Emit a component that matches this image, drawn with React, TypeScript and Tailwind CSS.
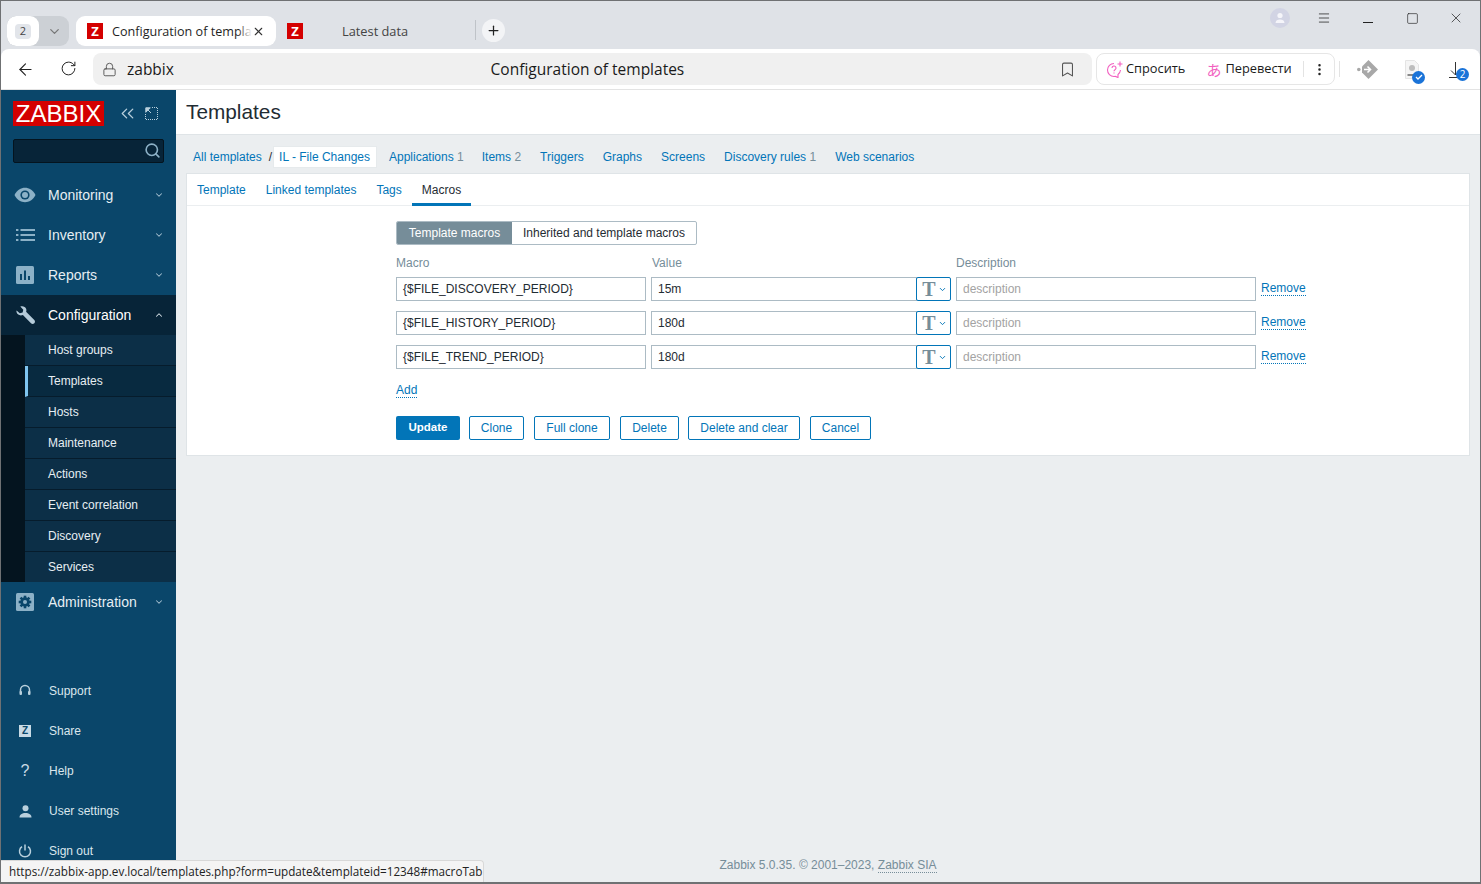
import React from "react";
import { ChevronDown, ChevronUp, X, Plus, ArrowLeft, RotateCw, Lock, Bookmark, Menu, Square, MoreVertical, Search, ChevronsLeft } from "lucide-react";

const ui = { fontFamily: '"Open Sans","Noto Sans",sans-serif' };

const ZIcon = () => (
  <span className="flex h-4 w-4 items-center justify-center bg-[#d40000] text-[13px] font-bold leading-none text-white">Z</span>
);

const NavIcon = ({ name }: { name: string }) => {
  const c = "#8cb1c7";
  if (name === "eye")
    return (
      <svg width="22" height="16" viewBox="0 0 22 16">
        <path d="M0.5 8C3 3 7 .8 11 .8S19 3 21.5 8C19 13 15 15.2 11 15.2S3 13 .5 8Z" fill={c} />
        <circle cx="11" cy="8" r="4.6" fill="#0a466a" />
        <circle cx="11" cy="8" r="3" fill={c} />
      </svg>
    );
  if (name === "list")
    return (
      <svg width="19" height="14" viewBox="0 0 19 14" fill={c} className="ml-[2px]">
        <rect x="0" y="1" width="2.4" height="2" /><rect x="4.5" y="1" width="14.5" height="2" />
        <rect x="0" y="6" width="2.4" height="2" /><rect x="4.5" y="6" width="14.5" height="2" />
        <rect x="0" y="11" width="2.4" height="2" /><rect x="4.5" y="11" width="14.5" height="2" />
      </svg>
    );
  if (name === "chart")
    return (
      <svg width="18" height="18" viewBox="0 0 18 18" className="ml-[2px]">
        <rect width="18" height="18" rx="1.5" fill={c} />
        <rect x="4" y="8" width="2" height="6" fill="#0a466a" /><rect x="8" y="4.5" width="2" height="9.5" fill="#0a466a" /><rect x="12" y="10" width="2" height="4" fill="#0a466a" />
      </svg>
    );
  if (name === "wrench")
    return (
      <svg width="19" height="19" viewBox="0 0 19 19" className="ml-[2px]">
        <path d="M.6 4.500 3.800 7.300l2.800-.7.700-2.800L4.300.6C6.800-.3 9.400.8 10.200 3c.3 1 .3 2-.1 2.800l8.200 8.100c.9.9.9 2.300 0 3.300-1 1-2.400 1-3.300 0L6.900 9c-2.700 1-5.400 0-6.200-2.400-.3-.7-.3-1.400-.1-2.100Z" fill="#b5cbd9" />
      </svg>
    );
  const teeth = [0, 45, 90, 135];
  return (
    <svg width="18" height="18" viewBox="0 0 18 18" className="ml-[2px]">
      <rect width="18" height="18" rx="1.5" fill={c} />
      {teeth.map((a) => (
        <rect key={a} x="7.700" y="2.700" width="2.600" height="12.600" fill="#0a466a" transform={`rotate(${a} 9 9)`} />
      ))}
      <circle cx="9" cy="9" r="4.700" fill="#0a466a" />
      <circle cx="9" cy="9" r="2" fill={c} />
    </svg>
  );
};

const MainItem = ({ icon, label, active }: { icon: string; label: string; active?: boolean }) => (
  <div className={"flex h-10 items-center pl-[13px] pr-[12px] " + (active ? "bg-[#072438] text-white" : "text-[#e6eef3]")}>
    <span className="flex w-[34px] items-center"><NavIcon name={icon} /></span>
    <span className="flex-1 text-[14px] leading-[20px]">{label}</span>
    {active ? <ChevronUp size={10} strokeWidth={2.500} className="text-[#d5e0e7]" /> : <ChevronDown size={10} strokeWidth={2.500} className="text-[#a5c0d0]" />}
  </div>
);

const SubItem = ({ label, active, last }: { label: string; active?: boolean; last?: boolean }) => (
  <div className={(last ? "h-[30px] " : "h-[31px] border-b border-[#061c2c] ") + "flex items-center text-[12px] text-[#e6eef3] " + (active ? "border-l-[3px] border-l-[#7fc4ef] bg-[#082a40] pl-5" : "bg-[#0c2f47] pl-[23px]")}>
    {label}
  </div>
);

const BottomIcon = ({ name }: { name: string }) => {
  const c = "#b9d0dd";
  if (name === "head")
    return (
      <svg width="14" height="14" viewBox="0 0 14 14" fill="none">
        <path d="M2.500 8.500V6a4.500 4.500 0 0 1 9 0v2.500" stroke={c} strokeWidth="1.500" />
        <rect x="1.500" y="7" width="2.500" height="4" rx="1" fill={c} /><rect x="10" y="7" width="2.500" height="4" rx="1" fill={c} />
      </svg>
    );
  if (name === "z") return <span className="flex h-3 w-3 items-center justify-center bg-[#c8dae5] text-[10px] font-bold leading-none text-[#0a466a]">Z</span>;
  if (name === "q") return <span className="text-[16px] leading-none text-[#c8dae5]">?</span>;
  if (name === "user")
    return (
      <svg width="13" height="13" viewBox="0 0 13 13" fill={c}>
        <circle cx="6.500" cy="3.300" r="3" /><path d="M.5 12.500c0-3 2.500-4.500 6-4.500s6 1.500 6 4.500Z" />
      </svg>
    );
  return (
    <svg width="14" height="14" viewBox="0 0 14 14" fill="none" stroke={c} strokeWidth="1.500">
      <path d="M4 2.700a5.500 5.500 0 1 0 6 0" /><path d="M7 .5v6" />
    </svg>
  );
};

const BottomItem = ({ icon, label }: { icon: string; label: string }) => (
  <div className="flex h-10 items-center text-[12px] text-[#dbe6ed]">
    <span className="flex w-[48px] justify-center"><BottomIcon name={icon} /></span>
    {label}
  </div>
);

const Link = ({ children, count }: { children: React.ReactNode; count?: string }) => (
  <span className="text-[#0275b8]">{children}{count && <span className="text-[#768d99]"> {count}</span>}</span>
);

const MacroRow = ({ macro, value }: { macro: string; value: string }) => (
  <div className="flex h-6 items-center gap-[5px]">
    <div className="flex h-6 w-[250px] items-center border border-[#acbbc4] px-1.5 text-[#1f2c33]">{macro}</div>
    <div className="flex w-[300px]">
      <div className="flex h-6 flex-1 items-center border border-[#acbbc4] px-1.5 text-[#1f2c33]">{value}</div>
      <div className="-ml-px flex h-6 w-[35px] items-center justify-center gap-[2px] rounded-[2px] border border-[#0275b8] pl-[2px]">
        <span className="text-[20px] font-bold leading-none text-[#768d99]" style={{ fontFamily: '"Liberation Serif",serif' }}>T</span>
        <ChevronDown size={9} strokeWidth={2.500} className="text-[#0275b8]" />
      </div>
    </div>
    <div className="flex h-6 w-[300px] items-center border border-[#acbbc4] px-1.5 text-[#a3a3a3]">description</div>
    <span className="border-b border-dotted border-[#0275b8] leading-[13px] text-[#0275b8]">Remove</span>
  </div>
);

export default function App() {
  const btn = "flex h-6 items-center justify-center rounded-[2px] border border-[#0275b8] text-[#0275b8] ";
  return (
    <div className="relative flex h-[884px] w-[1481px] flex-col overflow-hidden border border-b-2 border-[#6f7173] bg-[#dfe2e7]" style={{ fontFamily: '"Liberation Sans",Arial,sans-serif', fontSize: 12 }}>
      {/* Browser tabs */}
      <div className="flex h-[48px] shrink-0 pt-[15px] pl-1.5 text-[14px] text-[#1f1f1f]" style={ui}>
        <div className="flex h-[30px] w-[62px] overflow-hidden rounded-[9px] bg-[#ccd0d5]">
          <div className="flex w-[32px] items-center justify-center rounded-[9px] bg-white">
            <span className="flex h-[15px] w-[16px] items-center justify-center rounded-[4px] bg-[#e2e5ea] text-[11px] text-[#444]">2</span>
          </div>
          <div className="flex flex-1 items-center justify-center"><ChevronDown size={15} className="text-[#777]" /></div>
        </div>
        <div className="ml-[7px] flex h-[30px] w-[200px] items-center rounded-[9px] bg-white pl-[11px] pr-[11px]">
          <ZIcon />
          <span className="relative ml-[9px] flex-1 whitespace-nowrap pt-[2px] text-[12.600px]">
            Configuration of templa
            <span className="absolute right-0 top-0 h-full w-[14px] bg-gradient-to-r from-white/0 to-white" />
          </span>
          <X size={13} className="text-[#333]" />
        </div>
        <div className="flex h-[30px] w-[199px] items-center pl-[11px]">
          <ZIcon />
          <span className="ml-[39px] pt-[2px] text-[12.800px] text-[#444]">Latest data</span>
        </div>
        <div className="-mt-px flex h-[30px] items-center">
          <div className="h-5 w-px bg-[#bfc3c8]" />
          <div className="ml-1.5 flex h-[23px] w-[23px] items-center justify-center rounded-full bg-[#f3f4f6]"><Plus size={15} className="text-[#222]" /></div>
        </div>
        <div className="ml-auto flex h-[4px] items-start">
          <div className="-mt-[8px] flex items-center text-[#222]">
            <div className="flex h-[20px] w-[20px] items-center justify-center rounded-full bg-[#d2d4e4]">
              <svg width="12" height="12" viewBox="0 0 12 12" fill="#f5f5fa"><circle cx="6" cy="3.500" r="2.600" /><path d="M1.500 11c0-2.500 2-3.500 4.500-3.500s4.500 1 4.500 3.500Z" /></svg>
            </div>
            <Menu size={14} className="ml-[27px]" strokeWidth={1.300} />
            <div className="ml-[32px] mt-[8px] h-px w-[10px] bg-[#222]" />
            <Square size={13} className="ml-[33px]" strokeWidth={1.200} />
            <X size={16} className="ml-[29px] mr-[16px]" strokeWidth={1.100} />
          </div>
        </div>
      </div>

      {/* Browser toolbar */}
      <div className="flex h-[41px] shrink-0 items-center rounded-t-[8px] border-b border-[#e3e3e3] bg-white" style={ui}>
        <ArrowLeft size={19} strokeWidth={1.400} className="ml-[15px] text-[#222]" />
        <RotateCw size={17} strokeWidth={1.400} className="ml-[25px] -mt-[2px] text-[#222]" />
        <div className="relative ml-[16px] flex h-[32px] w-[999px] items-center rounded-[8px] bg-[#f0f0f0]">
          <Lock size={15} strokeWidth={1.500} className="ml-[9px] text-[#555]" />
          <span className="ml-[10px] pt-[2px] text-[15.500px] text-[#1a1a1a]">zabbix</span>
          <span className="flex-1 pr-[58px] pt-[2px] text-center text-[15.500px] text-[#1a1a1a]">Configuration of templates</span>
          <Bookmark size={17} strokeWidth={1.500} className="mr-[16px] text-[#555]" />
        </div>
        <div className="ml-[4px] flex h-[32px] w-[239px] items-center rounded-[8px] border border-[#e6e6e6] text-[12.800px] text-[#1a1a1a]">
          <svg width="18" height="17" viewBox="0 0 18 17" className="ml-[9px]" fill="none" stroke="#f25fc0" strokeWidth="1.100">
            <path d="M8 2.500a6.500 6.500 0 1 0 0 13c.5 0 .9 0 1.400-.1L12 16.500v-3A6.500 6.500 0 0 0 14.500 9" />
            <path d="M6 7a2 2 0 1 1 3 1.700c-.6.4-1 .7-1 1.600M8 11.500v1" /><path d="M14 .5v5M11.500 3h5" />
          </svg>
          <span className="ml-[2px]">Спросить</span>
          <span className="ml-[21px] text-[15px] leading-none text-[#f25fc0]" style={{ fontFamily: '"Noto Sans CJK JP",sans-serif' }}>あ</span>
          <span className="ml-[4px]">Перевести</span>
          <div className="ml-[11px] h-[16px] w-px bg-[#e3e3e3]" />
          <MoreVertical size={15} className="ml-[8px] text-[#222]" />
        </div>
        <div className="ml-[4px] h-[16px] w-px bg-[#e3e3e3]" />
        <svg width="21" height="19" viewBox="0 0 21 19" className="ml-[17px]">
          <path d="M11.500 0 21 9.500 11.500 19 5 12.500V6.500Z" fill="#a8a8a8" />
          <path d="M7 9.500h6M10.500 6.500l3 3-3 3" stroke="#fff" strokeWidth="1.600" fill="none" />
          <circle cx="1.800" cy="9.500" r="1.800" fill="#a8a8a8" />
        </svg>
        <div className="relative ml-[27px] h-[19px] w-[14px]">
          <svg width="14" height="19" viewBox="0 0 14 19">
            <path d="M.5.5h9l4 4v14H.5Z" fill="#f5f5f5" stroke="#e4e4e4" />
            <circle cx="7" cy="8" r="3" fill="#bdbdbd" /><rect x="2.500" y="14" width="6" height="2" fill="#888" />
          </svg>
          <span className="absolute -bottom-[5px] -right-[6px] flex h-[13px] w-[13px] items-center justify-center rounded-full bg-[#1a73d8]">
            <svg width="8" height="8" viewBox="0 0 8 8" fill="none" stroke="#fff" strokeWidth="1.300"><path d="M1 4l2 2 4-4" /></svg>
          </span>
        </div>
        <div className="relative ml-[30px] mt-[1px]">
          <svg width="13" height="18" viewBox="0 0 13 18" fill="none" stroke="#333" strokeWidth="1"><path d="M6.500 1v13M2 9.500 6.500 14 11 9.500M0 16.500h12" /></svg>
          <span className="absolute -right-[7px] bottom-[-2px] flex h-[13px] w-[13px] items-center justify-center rounded-full bg-[#1a73d8] text-[10px] leading-none text-white">2</span>
        </div>
      </div>

      <div className="flex min-h-0 flex-1 bg-[#ebeef0]">
        {/* Sidebar */}
        <div className="flex w-[175px] shrink-0 flex-col bg-[#0a466a]">
          <div className="flex h-[49px] shrink-0 items-start pl-3 pt-[11px]">
            <span className="flex h-[25px] w-[91px] items-center justify-center bg-[#d40000] text-[24px] leading-none text-white">ZABBIX</span>
            <ChevronsLeft size={21} strokeWidth={1.500} className="ml-[13px] mt-[2px] text-[#b9d0dd]" />
            <svg width="13" height="13" viewBox="0 0 13 13" className="ml-[7px] mt-[6px]" fill="none" stroke="#b9d0dd">
              <path d="M7 .5h5.500V12.500H.5V7" strokeDasharray="1 1" /><path d="M1 1l5 5" /><path d="M.8.8h4.500L.8 5.300Z" fill="#b9d0dd" />
            </svg>
          </div>
          <div className="mx-3 flex h-6 shrink-0 items-center justify-end rounded-[2px] border border-[#04141f] bg-[#072438] pb-[2px] pr-[2px]">
            <Search size={17} strokeWidth={2.300} className="text-[#8cb1c7]" />
          </div>
          <div className="mt-3 shrink-0">
            <MainItem icon="eye" label="Monitoring" />
            <MainItem icon="list" label="Inventory" />
            <MainItem icon="chart" label="Reports" />
            <MainItem icon="wrench" label="Configuration" active />
            <div className="flex bg-[#04141f]">
              <div className="w-6 shrink-0" />
              <div className="flex-1">
                <SubItem label="Host groups" />
                <SubItem label="Templates" active />
                <SubItem label="Hosts" />
                <SubItem label="Maintenance" />
                <SubItem label="Actions" />
                <SubItem label="Event correlation" />
                <SubItem label="Discovery" />
                <SubItem label="Services" last />
              </div>
            </div>
            <MainItem icon="gear" label="Administration" />
          </div>
          <div className="mt-[49px] shrink-0">
            <BottomItem icon="head" label="Support" />
            <BottomItem icon="z" label="Share" />
            <BottomItem icon="q" label="Help" />
            <BottomItem icon="user" label="User settings" />
            <BottomItem icon="power" label="Sign out" />
          </div>
        </div>

        {/* Main */}
        <div className="flex min-w-0 flex-1 flex-col">
          <div className="flex h-[45px] shrink-0 items-center border-b border-[#dfe4e7] bg-white pl-[10px] text-[20.800px] text-[#1f2c33]">Templates</div>
          <div className="flex h-[38px] shrink-0 items-center pl-[17px] pt-[6px]">
            <Link>All templates</Link>
            <span className="ml-[7px] text-[#1f2c33]">/</span>
            <div className="ml-px flex h-[22px] items-center border border-[#e6eaec] bg-white pl-[5px] pr-[6px]"><Link>IL - File Changes</Link></div>
            <span className="ml-[12px]"><Link count="1">Applications</Link></span>
            <span className="ml-[18px]"><Link count="2">Items</Link></span>
            <span className="ml-[19px]"><Link>Triggers</Link></span>
            <span className="ml-[19px]"><Link>Graphs</Link></span>
            <span className="ml-[19px]"><Link>Screens</Link></span>
            <span className="ml-[19px]"><Link count="1">Discovery rules</Link></span>
            <span className="ml-[19px]"><Link>Web scenarios</Link></span>
          </div>
          <div className="ml-[10px] mr-[10px] shrink-0 border border-[#dfe4e7] bg-white">
            <div className="flex h-[32px] border-b border-[#ebeef0]">
              <div className="flex items-center px-[10px] text-[#0275b8]">Template</div>
              <div className="flex items-center px-[10px] text-[#0275b8]">Linked templates</div>
              <div className="flex items-center px-[10px] text-[#0275b8]">Tags</div>
              <div className="flex h-[32px] items-center border-b-[3px] border-[#0275b8] px-[10px] pt-[3px] text-[#1f2c33]">Macros</div>
            </div>
            <div className="pl-[209px] pt-[15px] pb-[15px]">
              <div className="flex h-6 w-fit overflow-hidden rounded-[2px] border border-[#acbbc4]">
                <div className="flex w-[115px] items-center justify-center bg-[#768d99] text-white">Template macros</div>
                <div className="flex w-[184px] items-center justify-center text-[#1f2c33]">Inherited and template macros</div>
              </div>
              <div className="mt-[11px] flex h-[14px] items-center text-[#768d99]">
                <span className="w-[256px]">Macro</span>
                <span className="w-[304px]">Value</span>
                <span>Description</span>
              </div>
              <div className="mt-[7px] flex flex-col gap-[10px]">
                <MacroRow macro="{$FILE_DISCOVERY_PERIOD}" value="15m" />
                <MacroRow macro="{$FILE_HISTORY_PERIOD}" value="180d" />
                <MacroRow macro="{$FILE_TREND_PERIOD}" value="180d" />
              </div>
              <div className="mt-[12px] h-[14px]"><span className="border-b border-dotted border-[#0275b8] leading-[13px] text-[#0275b8]">Add</span></div>
              <div className="mt-[21px] flex">
                <div className="flex h-6 w-[64px] items-center justify-center rounded-[2px] bg-[#0275b8] text-[11.500px] font-bold text-white">Update</div>
                <div className={btn + "ml-[9px] w-[55px]"}>Clone</div>
                <div className={btn + "ml-[10px] w-[76px]"}>Full clone</div>
                <div className={btn + "ml-[10px] w-[59px]"}>Delete</div>
                <div className={btn + "ml-[9px] w-[112px]"}>Delete and clear</div>
                <div className={btn + "ml-[10px] w-[61px]"}>Cancel</div>
              </div>
            </div>
          </div>
          <div className="mt-auto flex h-[38px] shrink-0 items-start justify-center pt-[12px] text-[#768d99]">
            <span>Zabbix 5.0.35. © 2001–2023, <span className="border-b border-dotted border-[#768d99]">Zabbix SIA</span></span>
          </div>
        </div>
      </div>

      {/* Status bubble */}
      <div className="absolute bottom-0 left-0 flex h-[22px] w-[483px] items-center whitespace-nowrap rounded-tr-[4px] border-t border-r border-[#d8d8d8] bg-[#f4f4f4] pl-2 text-[11.700px] text-[#222]" style={ui}>
        https://zabbix-app.ev.local/templates.php?form=update&amp;templateid=12348#macroTab
      </div>
    </div>
  );
}
